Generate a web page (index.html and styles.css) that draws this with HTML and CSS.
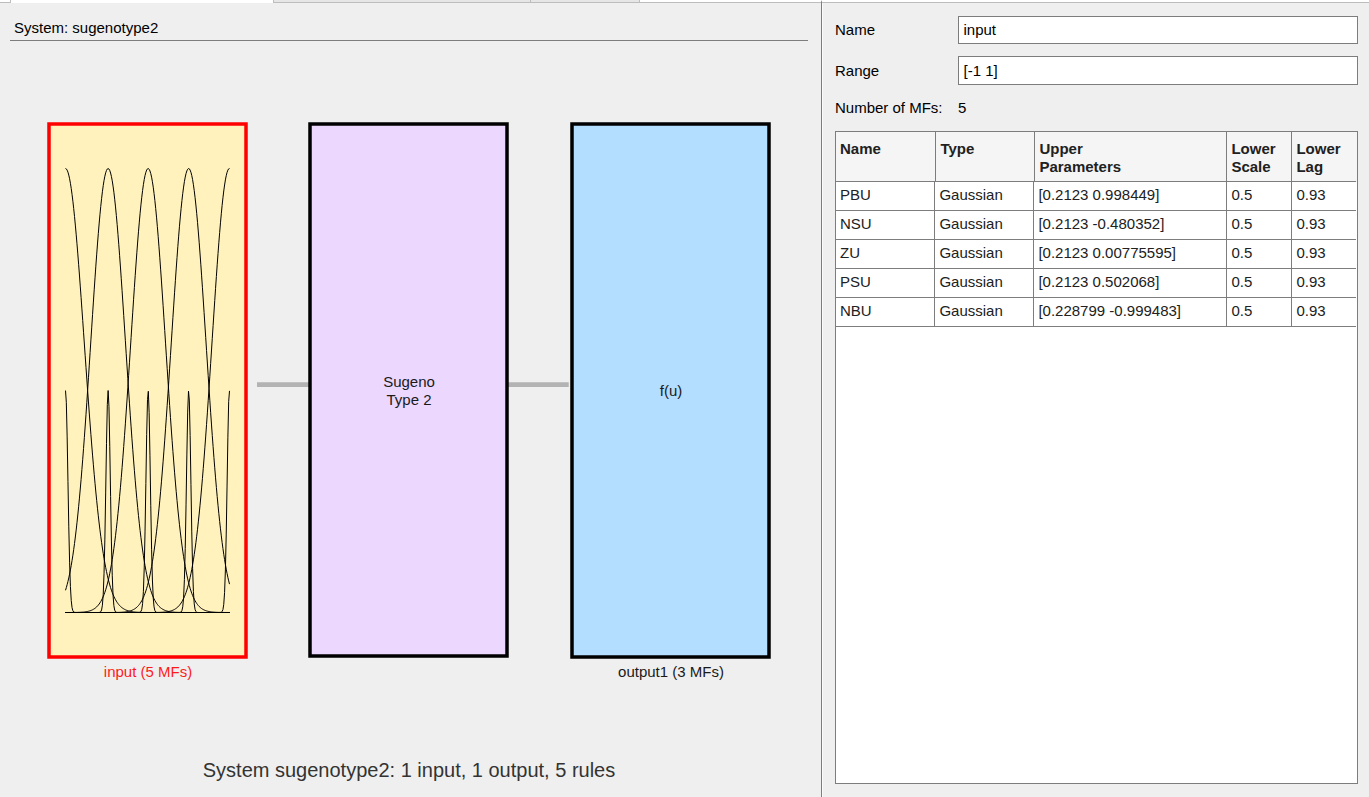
FILE: index.html
```html
<!DOCTYPE html>
<html lang="en">
<head>
<meta charset="utf-8">
<title>System: sugenotype2</title>
<link rel="stylesheet" href="styles.css">
</head>
<body>
<div class="app">
  <main class="system">
    <div class="tabs"><span class="tab-gap"></span><span class="tab active"></span><span class="tab second"></span><span class="tab third"></span></div>
    <h1 class="system-title">System: sugenotype2</h1>
    <svg class="diagram" width="821" height="756" viewBox="0 41 821 756">
      <path class="wire" d="M257 384.7H309M508 384.7H568.7"/>
      <rect class="block input" x="49" y="124" width="197" height="533"/>
      <rect class="block rules" x="310" y="124" width="197" height="532"/>
      <rect class="block output" x="572" y="124" width="197" height="533"/>
      <g id="curves" class="curves"></g>
      <text class="label" x="409" y="387">Sugeno</text>
      <text class="label" x="409" y="405">Type 2</text>
      <text class="label" x="671" y="396">f(u)</text>
      <text class="label selected" x="148" y="677">input (5 MFs)</text>
      <text class="label" x="671" y="677">output1 (3 MFs)</text>
      <text class="summary" x="409" y="777">System sugenotype2: 1 input, 1 output, 5 rules</text>
    </svg>
  </main>
  <aside class="properties">
    <div class="field name-field"><label for="name">Name</label><input id="name" type="text" value="input"></div>
    <div class="field range-field"><label for="range">Range</label><input id="range" type="text" value="[-1 1]"></div>
    <div class="field count-field"><span class="caption">Number of MFs:</span><span>5</span></div>
    <div class="table">
      <div class="row head"><div>Name</div><div>Type</div><div>Upper<br>Parameters</div><div>Lower<br>Scale</div><div>Lower<br>Lag</div></div>
      <div class="row"><div>PBU</div><div>Gaussian</div><div>[0.2123 0.998449]</div><div>0.5</div><div>0.93</div></div>
      <div class="row"><div>NSU</div><div>Gaussian</div><div>[0.2123 -0.480352]</div><div>0.5</div><div>0.93</div></div>
      <div class="row"><div>ZU</div><div>Gaussian</div><div>[0.2123 0.00775595]</div><div>0.5</div><div>0.93</div></div>
      <div class="row"><div>PSU</div><div>Gaussian</div><div>[0.2123 0.502068]</div><div>0.5</div><div>0.93</div></div>
      <div class="row"><div>NBU</div><div>Gaussian</div><div>[0.228799 -0.999483]</div><div>0.5</div><div>0.93</div></div>
    </div>
  </aside>
</div>
<script src="curves.js"></script>
</body>
</html>
```
FILE: styles.css
```css
* { box-sizing: border-box; }
body {
  margin: 0;
  background: #efefef;
  color: #000;
  font: 15px/18px "Liberation Sans", Arial, sans-serif;
}
.app { display: flex; height: 797px; overflow: hidden; }
.system { width: 821px; flex: none; }
.tabs { display: flex; height: 3px; background: #fff; border-bottom: 1px solid #bdbdbd; }
.tab-gap { width: 10px; }
.tab { height: 2px; background: #e6e6e6; border-right: 1px solid #bdbdbd; }
.tab.active { width: 264px; height: 3px; background: #fff; border-left: 1px solid #bdbdbd; }
.tab.second { width: 257px; }
.tab.third { width: 109px; }
.system-title {
  height: 38px;
  margin: 0 13px 0 10px;
  padding: 16px 4px 0;
  border-bottom: 1px solid #7d7d7d;
  font-size: 15px;
  font-weight: normal;
}
.diagram { display: block; }
.wire { stroke: #b3b3b3; stroke-width: 4.7; }
.block { stroke: #000; stroke-width: 3.5; }
.block.input { fill: #fff2bd; stroke: #f00; }
.block.rules { fill: #ecd7ff; }
.block.output { fill: #b3deff; }
.curves path { fill: none; stroke: #000; stroke-width: 1; }
.label { fill: #1a1a1a; font-size: 15px; text-anchor: middle; }
.label.selected { fill: #ff1a1a; }
.summary { fill: #333; font-size: 20px; text-anchor: middle; }
.properties {
  flex: 1;
  display: flex;
  flex-direction: column;
  border-left: 1px solid #7d7d7d;
  border-top: 2px solid #fff;
  box-shadow: inset 0 1px #bdbdbd, inset 1px 0 #fafafa;
  padding: 14px 11px 13px 13px;
}
.field { display: flex; align-items: center; flex: none; }
.field label, .caption { width: 123px; }
.field input {
  flex: 1;
  height: 100%;
  margin: 0;
  padding: 0 4.5px;
  border: 1px solid #7d7d7d;
  background: #fff;
  color: #000;
  font: inherit;
}
.name-field { height: 28px; margin-bottom: 12px; }
.name-field input { padding-bottom: 2px; }
.range-field { height: 29px; margin-bottom: 14px; }
.count-field { height: 18px; margin-bottom: 14px; }
.table { flex: 1; border: 1px solid #7d7d7d; background: #fff; padding-right: 1px; }
.row {
  display: grid;
  grid-template-columns: 99px 99px 193px 65px 1fr;
  height: 29px;
  border-bottom: 1px solid #7d7d7d;
  color: #212121;
}
.row > div { padding: 4px 4px 0 4.4px; border-right: 1px solid #7d7d7d; white-space: nowrap; }
.row > div:first-child { padding-left: 4px; }
.row > div:last-child { border-right: 0; }
.row.head {
  grid-template-columns: 100px 99px 192px 65px 1fr;
  height: 50px;
  background: #f5f5f5;
  box-shadow: 1px 0 #f5f5f5;
  font-weight: bold;
}
.row.head > div { padding-top: 8px; }
```
FILE: curves.js
```js
// Upper and lower membership functions over the input range [-1, 1].
const functions = [
  [0.2123, 0.998449],
  [0.2123, -0.480352],
  [0.2123, 0.00775595],
  [0.2123, 0.502068],
  [0.228799, -0.999483],
];
const lowerScale = 0.5;
const lowerLag = 0.93;
const samples = 200;
const plot = { left: 65.5, width: 164, base: 612.5, height: 444 };

function curve(sigma, mean, scale) {
  const points = [];
  for (let i = 0; i <= samples; i++) {
    const u = -1 + (2 * i) / samples;
    const value = scale * Math.exp(-((u - mean) ** 2) / (2 * sigma * sigma));
    const x = plot.left + (plot.width * i) / samples;
    points.push(x.toFixed(2) + " " + (plot.base - plot.height * value).toFixed(2));
  }
  return '<path d="M' + points.join("L") + '"/>';
}

document.getElementById("curves").innerHTML = functions
  .map(([sigma, mean]) => {
    const narrow = sigma * Math.sqrt(Math.log(lowerLag) / Math.log(0.01));
    return curve(sigma, mean, 1) + curve(narrow, mean, lowerScale);
  })
  .join("");
```
